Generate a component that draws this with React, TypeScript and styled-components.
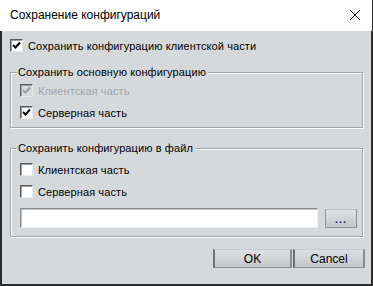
import React from "react";
import styled, { createGlobalStyle } from "styled-components";

const GlobalStyle = createGlobalStyle`
  html, body { margin: 0; padding: 0; background: #ffffff; }
  * { box-sizing: border-box; }
`;

const Window = styled.div`
  width: 373px;
  height: 286px;
  display: flex;
  flex-direction: column;
  font-family: "Liberation Sans", Arial, sans-serif;
  font-size: 11px;
  color: #000;
`;

const TitleBar = styled.div`
  height: 31px;
  background: #ffffff;
  border-right: 1px solid #2b2b2b;
  display: flex;
  align-items: center;
  justify-content: space-between;
  padding: 0 10px 1px 10px;
`;

const TitleText = styled.span`
  font-family: "Liberation Sans", Arial, sans-serif;
  font-size: 12px;
  color: #000;
`;

const CloseIcon = styled.svg`
  width: 12px;
  height: 12px;
  margin-right: 1px;
`;

const Body = styled.div`
  flex: 1;
  background: #d5d9dc;
  border-left: 2px solid #2b2b2b;
  border-right: 2px solid #2b2b2b;
  border-bottom: 2px solid #2b2b2b;
  padding: 8px 6px 0 8px;
  display: flex;
  flex-direction: column;
`;

const Row = styled.label<{ $disabled?: boolean }>`
  display: flex;
  align-items: center;
  gap: 5px;
  height: 13px;
  color: ${(p) => (p.$disabled ? "#a2a6a9" : "#000")};
  white-space: nowrap;
  letter-spacing: 0.1px;
`;

const Box = styled.span<{ $disabled?: boolean }>`
  width: 13px;
  height: 13px;
  flex: none;
  background: ${(p) => (p.$disabled ? "#d5d9dc" : "#ffffff")};
  border-top: 1px solid #5a5a5a;
  border-left: 1px solid #5a5a5a;
  border-right: 1px solid #e8eaeb;
  border-bottom: 1px solid #e8eaeb;
  box-shadow: inset 1px 1px 0 #a0a0a0;
  display: flex;
  align-items: center;
  justify-content: center;
`;

const Group = styled.div<{ $top: number; $pt: number }>`
  position: relative;
  margin-top: ${(p) => p.$top}px;
  margin-right: 2px;
  border: 1px solid #a3a6a8;
  box-shadow: inset 1px 1px 0 #ffffff, 1px 1px 0 #ffffff;
  padding: ${(p) => p.$pt}px 4px 8px 9px;
  display: flex;
  flex-direction: column;
  gap: 9px;
`;

const GroupTitle = styled.span`
  position: absolute;
  top: -8px;
  left: 6px;
  padding: 0 2px 0 1px;
  background: #d5d9dc;
  line-height: 14px;
  letter-spacing: 0.1px;
`;

const FileRow = styled.div`
  display: flex;
  gap: 7px;
  margin-top: 1px;
`;

const PathInput = styled.input`
  width: 298px;
  height: 20px;
  background: #fff;
  border-top: 1px solid #8a8d8f;
  border-left: 1px solid #8a8d8f;
  border-right: 1px solid #f2f3f4;
  border-bottom: 1px solid #f2f3f4;
  box-shadow: inset 1px 1px 0 #c0c3c5;
  outline: none;
  padding: 0 3px;
  font: inherit;
`;

const BrowseButton = styled.button`
  width: 32px;
  height: 19px;
  margin-top: 1px;
  padding: 0 0 4px 0;
  background: linear-gradient(#dfe2e4, #c3c7ca);
  border: 1px solid #8e9194;
  border-top-color: #b8bbbe;
  color: #23207a;
  font-family: "Liberation Sans", Arial, sans-serif;
  font-size: 11px;
  font-weight: bold;
  line-height: 8px;
  display: flex;
  align-items: flex-end;
  justify-content: center;
  letter-spacing: 1px;
`;

const ButtonBar = styled.div`
  display: flex;
  justify-content: flex-end;
  gap: 1px;
  margin-top: 12px;
`;

const DialogButton = styled.button<{ $w: number }>`
  width: ${(p) => p.$w}px;
  height: 19px;
  padding: 0;
  background: linear-gradient(#dde0e2, #c4c8cb);
  border-top: 1px solid #c9ccce;
  border-bottom: 1px solid #8f9295;
  border-left: 2px solid #6d7073;
  border-right: 2px solid #8a8d90;
  font-family: "Liberation Sans", Arial, sans-serif;
  font-size: 12px;
  color: #000;
`;

const Check = ({ disabled }: { disabled?: boolean }) => (
  <svg width="9" height="9" viewBox="0 0 9 9">
    <polyline
      points="1,4 3.5,6.5 8,1.5"
      fill="none"
      stroke={disabled ? "#9ea2a5" : "#000"}
      strokeWidth="2"
    />
  </svg>
);

const CheckRow = ({
  label,
  checked,
  disabled,
}: {
  label: string;
  checked?: boolean;
  disabled?: boolean;
}) => (
  <Row $disabled={disabled}>
    <Box $disabled={disabled}>{checked && <Check disabled={disabled} />}</Box>
    {label}
  </Row>
);

export default function App() {
  return (
    <>
      <GlobalStyle />
      <Window>
        <TitleBar>
          <TitleText>Сохранение конфигураций</TitleText>
          <CloseIcon viewBox="0 0 12 12">
            <path d="M1 1 L11 11 M11 1 L1 11" stroke="#111" strokeWidth="1" />
          </CloseIcon>
        </TitleBar>
        <Body>
          <CheckRow label="Сохранить конфигурацию клиентской части" checked />
          <Group $top={20} $pt={11}>
            <GroupTitle>Сохранить основную конфигурацию</GroupTitle>
            <CheckRow label="Клиентская часть" checked disabled />
            <CheckRow label="Серверная часть" checked />
          </Group>
          <Group $top={20} $pt={14}>
            <GroupTitle>Сохранить конфигурацию в файл</GroupTitle>
            <CheckRow label="Клиентская часть" />
            <CheckRow label="Серверная часть" />
            <FileRow>
              <PathInput />
              <BrowseButton>...</BrowseButton>
            </FileRow>
          </Group>
          <ButtonBar>
            <DialogButton $w={79}>OK</DialogButton>
            <DialogButton $w={72}>Cancel</DialogButton>
          </ButtonBar>
        </Body>
      </Window>
    </>
  );
}
